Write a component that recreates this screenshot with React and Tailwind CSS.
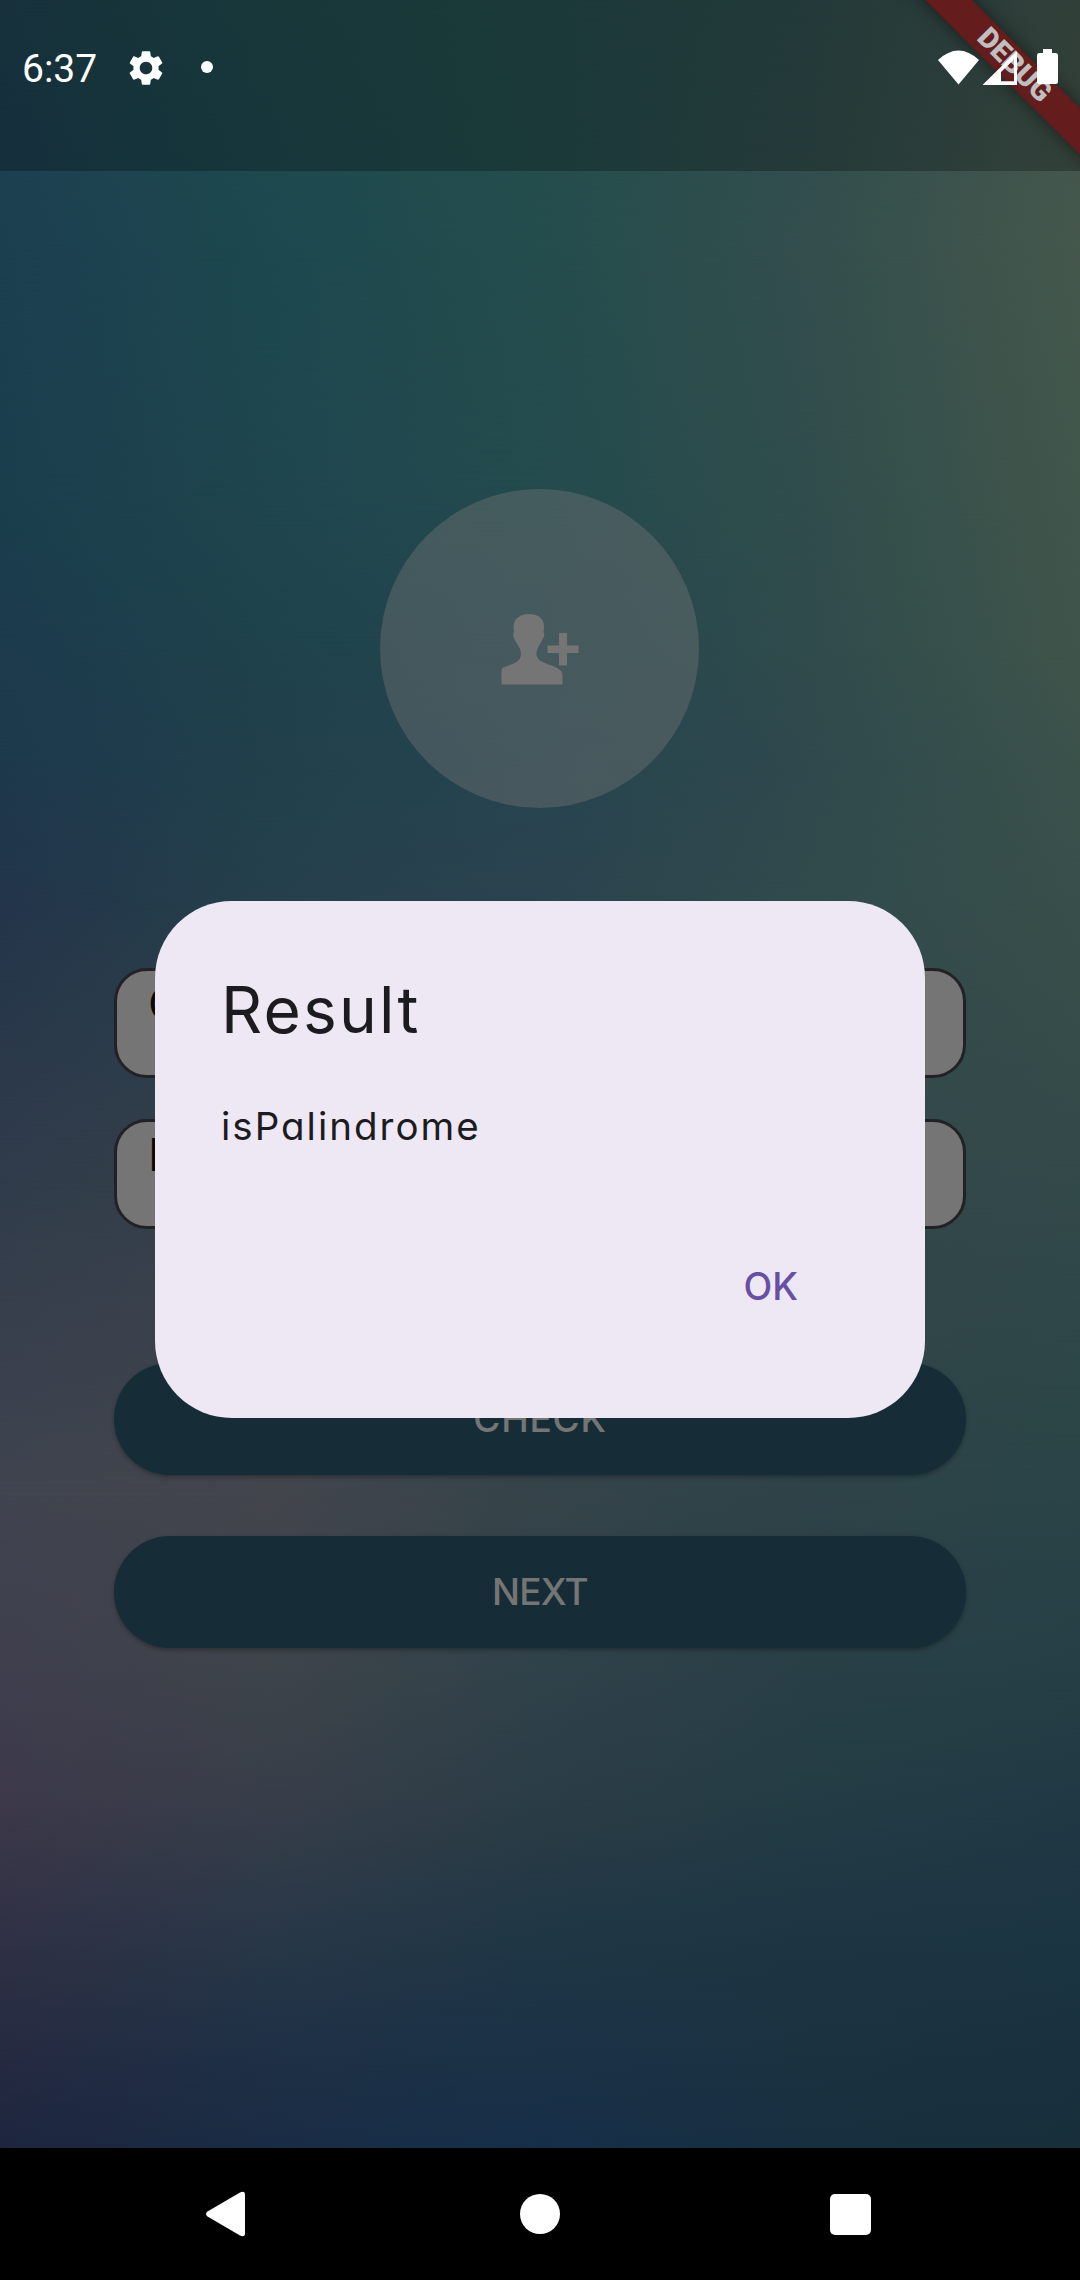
import React from "react";
import { MdSettings } from "react-icons/md";

// Colour rows of the wallpaper mesh: [y, colours from left to right]
const MESH = [
  [0, ["#1f4250", "#204b4e", "#254d4c", "#2f4e4d", "#43554e"]],
  [250, ["#1c3f50", "#1d484f", "#244d4d", "#334e4d", "#45584c"]],
  [500, ["#1b3e4c", "#1f464f", "#244b4e", "#304d4c", "#41564b"]],
  [650, ["#1c3b4c", "#1f424c", "#24474f", "#304b4c", "#3f554b"]],
  [760, ["#1d394c", "#21404c", "#264550", "#2f494d", "#3b524b"]],
  [900, ["#23354a", "#25404c", "#2b434f", "#314a4c", "#384f4b"]],
  [1150, ["#2f3b4b", "#344049", "#314349", "#33474a", "#344a4a"]],
  [1500, ["#40444f", "#43454c", "#35444a", "#2e4348", "#2a4447"]],
  [1670, ["#3f3f4e", "#3e444a", "#30424a", "#293f46", "#263f46"]],
  [1800, ["#3d394a", "#383e49", "#2b3d46", "#243c45", "#203944"]],
  [1950, ["#2f3045", "#273748", "#1f3645", "#1d3543", "#1b3542"]],
  [2060, ["#252a41", "#1e3045", "#1b3247", "#1b3241", "#19313f"]],
  [2148, ["#1d263e", "#1a2c45", "#162f49", "#172f3f", "#182f3a"]],
];

function Wallpaper() {
  return (
    <div className="absolute inset-0">
      {MESH.map(([y, colors], i) => {
        const mask =
          i === 0
            ? undefined
            : `linear-gradient(to bottom, transparent ${MESH[i - 1][0]}px, black ${y}px)`;
        return (
          <div
            key={y}
            className="absolute inset-0"
            style={{
              backgroundImage: `linear-gradient(to right, ${colors.join(", ")})`,
              maskImage: mask,
            }}
          />
        );
      })}
    </div>
  );
}

function StatusBar() {
  return (
    <header className="relative flex h-[171px] shrink-0 items-start justify-between overflow-hidden bg-black/25">
      <div className="absolute top-[49px] left-[864px] flex h-[33px] w-[300px] rotate-45 items-center justify-center bg-[#641c1c] shadow-[0_0_18px_rgba(0,0,0,0.5)]">
        <span className="font-[Roboto] text-[28.500px] leading-none font-black text-[#bfbfbf]">DEBUG</span>
      </div>
      <div className="relative mt-[45px] flex h-[46px] items-center pl-[22px] text-white">
        <span className="w-[103px] pt-[2px] font-[Roboto] text-[39px] leading-none">6:37</span>
        <MdSettings className="mb-[1px] h-[42px] w-[42px]" />
        <span className="mb-[2px] ml-[34px] h-3 w-3 rounded-full bg-white" />
      </div>
      <svg className="relative mt-[45px] mr-5 h-[44px] w-[125px] fill-white" viewBox="935 45 125 44">
        <path d="M938 60 Q958.500 41 979 60 L958.500 84.500Z" />
        <path fillRule="evenodd" d="M982.500 85 L1017 51 V85Z M1001 72 V81.300 H1014 V59.500Z" />
        <path d="M1043 49 h9 v4 h3.500 q2.500 0 2.500 2.500 v26 q0 2.500 -2.500 2.500 h-16 q-2.500 0 -2.500 -2.500 v-26 q0 -2.500 2.500 -2.500 h3.500z" />
      </svg>
    </header>
  );
}

function Avatar() {
  return (
    <div className="mr-[2px] flex h-[319px] w-[319px] items-center justify-center rounded-full bg-[#757575]/42">
      <svg className="h-[80px] w-[80px] fill-[#757575]" viewBox="499 609 80 80">
        <path d="M528.500 614 C520 614 513.500 619 513.500 627 L514 632 C512.500 634 513.500 638 515 640 C517 645 521 648 521 654 C521 660 516 663 510 665 C505 667 501.500 667 501.500 671 V684.500 H562.500 V675 C562.500 670 557 667.500 550 665 C542 662 536.500 660 536.500 654 C536.500 648 540 645 542 640 C544.500 637 545 634 543.500 632 L544 627 C544 618 538 614 528.500 614Z" />
        <path d="M559 633 h8 v12.500 h11.500 v7.500 h-11.500 v12.500 h-8 v-12.500 h-11.500 v-7.500 h11.500z" />
      </svg>
    </div>
  );
}

function Field({ value }) {
  return (
    <div className="h-[110px] w-full rounded-[33px] border-[3px] border-[#232126] bg-[#757575] pt-[7px] pl-[31px] text-[45px] leading-[52px] text-[#0a0a0a]">
      {value}
    </div>
  );
}

function ActionButton({ children, className }) {
  return (
    <button
      className={`flex h-[112px] w-[852px] items-center justify-center rounded-full bg-[#162d38] text-[37px] font-medium text-[#757575] shadow-[0_2px_4px_rgba(0,0,0,0.3)] ${className}`}
    >
      {children}
    </button>
  );
}

function ResultDialog() {
  return (
    <div className="absolute top-[901px] left-[155px] flex h-[517px] w-[770px] flex-col rounded-[77px] bg-[#eee8f4] pt-[65px] pr-[127px] pl-[66px] text-[#1c1b1f]">
      <h1 className="text-[64px] leading-[88px] tracking-[2.2px]">Result</h1>
      <p className="mt-[44px] text-[38.500px] leading-[56px] tracking-[2px]">isPalindrome</p>
      <button className="mt-[105px] self-end text-[37.500px] leading-[56px] font-medium text-[#6750a4]">OK</button>
    </div>
  );
}

function NavigationBar() {
  return (
    <nav className="flex h-[132px] shrink-0 items-center bg-black pl-[206px]">
      <svg className="h-[46px] w-[40px] fill-white" viewBox="0 0 40 46">
        <path d="M1.500 20.500 L34 1.500 Q39 -1 39 4 V42 Q39 47 34 44.500 L1.500 25.500 Q-1.500 23 1.500 20.500Z" />
      </svg>
      <span className="ml-[274px] h-[40px] w-[40px] rounded-full bg-white" />
      <span className="ml-[270px] h-[41px] w-[41px] rounded-[5px] bg-white" />
    </nav>
  );
}

export default function App() {
  return (
    <div className="relative flex h-[2280px] w-[1080px] flex-col overflow-hidden font-['Inter',sans-serif] [font-feature-settings:'cv11']">
      <Wallpaper />
      <div className="relative flex h-full flex-col">
        <StatusBar />
        <main className="flex flex-1 flex-col items-center pt-[318px]">
          <Avatar />
          <div className="mt-[160px] flex w-[852px] flex-col gap-[41px]">
            <Field value="C" />
            <Field value="P" />
          </div>
          <div className="mt-[134px] flex flex-col gap-[61px]">
            <ActionButton className="tracking-[0.8px]">CHECK</ActionButton>
            <ActionButton className="tracking-[-0.7px]">NEXT</ActionButton>
          </div>
        </main>
        <NavigationBar />
      </div>
      <ResultDialog />
    </div>
  );
}
